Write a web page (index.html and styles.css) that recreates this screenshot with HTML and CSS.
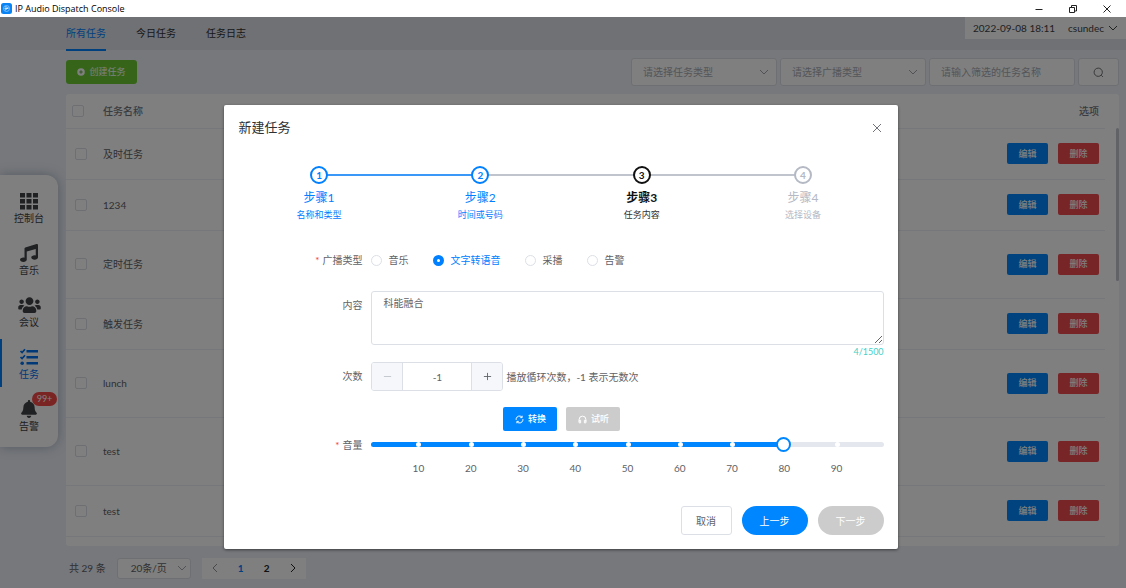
FILE: index.html
```html
<!DOCTYPE html>
<html lang="zh-CN">
<head>
<meta charset="utf-8">
<title>IP Audio Dispatch Console</title>
<link rel="stylesheet" href="styles.css">
</head>
<body>
<header class="titlebar">
  <svg class="app-logo" viewBox="0 0 22 22"><rect width="22" height="22" rx="5" fill="#0a84f5"/><circle cx="11" cy="11" r="6" fill="none" stroke="#8cc8ff" stroke-width="1.6"/><path d="M7 11h8M8 14c3-1 5-3 6-6M8 8h4" fill="none" stroke="#fff" stroke-width="1.4"/></svg>
  <h1 class="app-name">IP Audio Dispatch Console</h1>
  <div class="win-controls">
    <button class="win-btn" aria-label="最小化"><svg viewBox="0 0 10 10"><path d="M1.500 5.500h7"/></svg></button>
    <button class="win-btn" aria-label="还原"><svg viewBox="0 0 10 10"><path d="M1.500 3.500h5v5h-5zM3.500 3V1.500h5v5.500H7"/></svg></button>
    <button class="win-btn" aria-label="关闭窗口"><svg viewBox="0 0 10 10"><path d="M1.500 1.500l7 7M8.500 1.500l-7 7"/></svg></button>
  </div>
</header>

<div class="app">
  <header class="topbar">
    <nav class="tabs">
      <a class="tab active" href="#all">所有任务</a>
      <a class="tab" href="#today">今日任务</a>
      <a class="tab" href="#log">任务日志</a>
    </nav>
    <div class="user-box">
      <time>2022-09-08 18:11</time>
      <button class="user-btn">csundec <svg class="chev" viewBox="0 0 10 10"><path d="M1 3l4 4 4-4"/></svg></button>
    </div>
  </header>

  <div class="body">
    <aside class="side">
      <nav class="side-nav">
        <a class="side-item" href="#console">
          <svg class="side-icon" viewBox="0 0 18 18"><path d="M0 1h5v4.500H0zM6.500 1h5v4.500h-5zM13 1h5v4.500h-5zM0 7h5v4.500H0zM6.500 7h5v4.500h-5zM13 7h5v4.500h-5zM0 13h5v4.500H0zM6.500 13h5v4.500h-5zM13 13h5v4.500h-5z"/></svg>
          控制台</a>
        <a class="side-item" href="#music">
          <svg class="side-icon" viewBox="0 0 512 512"><path d="M511.990 32c0-22-21-36.500-41.600-30.500l-320 96A32 32 0 0 0 128 128v261c-10-3-21-5-32-5-53 0-96 28.700-96 64s43 64 96 64 96-28.700 96-64V214l256-75v186c-10-3-21-5-32-5-53 0-96 28.700-96 64s43 64 96 64 96-28.700 96-64z"/></svg>
          音乐</a>
        <a class="side-item" href="#meeting">
          <svg class="side-icon wide" viewBox="0 0 640 512"><path d="M96 224c35.300 0 64-28.700 64-64s-28.700-64-64-64-64 28.700-64 64 28.700 64 64 64zm448 0c35.300 0 64-28.700 64-64s-28.700-64-64-64-64 28.700-64 64 28.700 64 64 64zm32 32h-64c-17.600 0-33.500 7.100-45.100 18.600 40.300 22.100 68.900 62 75.100 109.400h66c17.700 0 32-14.300 32-32v-32c0-35.300-28.700-64-64-64zm-256 0c61.900 0 112-50.100 112-112S381.900 32 320 32 208 82.100 208 144s50.100 112 112 112zm76.800 32h-8.300c-20.800 10-43.900 16-68.500 16s-47.600-6-68.500-16h-8.300C179.600 288 128 339.600 128 403.200V432c0 26.500 21.500 48 48 48h288c26.500 0 48-21.500 48-48v-28.800c0-63.600-51.600-115.200-115.200-115.200zm-223.700-13.400C161.500 263.100 145.600 256 128 256H64c-35.300 0-64 28.700-64 64v32c0 17.700 14.300 32 32 32h65.900c6.300-47.400 34.900-87.300 75.200-109.400z"/></svg>
          会议</a>
        <a class="side-item active" href="#tasks">
          <svg class="side-icon" viewBox="0 0 18 18"><path d="M6.500 2H18v2.500H6.500zM6.500 8H18v2.500H6.500zM6.500 14H18v2.500H6.500z"/><circle cx="2.200" cy="15.200" r="1.800"/><path d="M.5 3l1.600 1.600L5 1.200M.5 9l1.600 1.600L5 7.200" fill="none" stroke="currentColor" stroke-width="1.700"/></svg>
          任务</a>
        <a class="side-item" href="#alarm">
          <svg class="side-icon" viewBox="0 0 448 512"><path d="M224 512c35.300 0 64-28.700 64-64H160c0 35.300 28.600 64 64 64zm215.400-149.700c-19.300-20.800-55.500-52-55.500-154.300 0-77.700-54.500-139.900-127.900-155.200V32c0-17.700-14.300-32-32-32s-32 14.300-32 32v20.800C118.600 68.100 64.100 130.300 64.100 208c0 102.300-36.200 133.500-55.500 154.300-6 6.400-8.700 14.100-8.600 21.700.1 16.400 13 32 32.100 32h383.800c19.100 0 32-15.600 32.100-32 0-7.600-2.600-15.300-8.600-21.700z"/></svg>
          告警<span class="badge">99+</span></a>
      </nav>
    </aside>

    <main class="main">
      <div class="toolbar">
        <button class="btn-create"><svg viewBox="0 0 16 16"><circle cx="8" cy="8" r="7.500" fill="currentColor"/><path d="M4.500 8h7M8 4.500v7" stroke="#5ba035" stroke-width="1.800"/></svg>创建任务</button>
        <div class="filters">
          <label class="select-wrap"><select class="filter" aria-label="任务类型"><option>请选择任务类型</option></select><svg class="chev" viewBox="0 0 10 10"><path d="M1 3l4 4 4-4"/></svg></label>
          <label class="select-wrap"><select class="filter" aria-label="广播类型"><option>请选择广播类型</option></select><svg class="chev" viewBox="0 0 10 10"><path d="M1 3l4 4 4-4"/></svg></label>
          <input class="filter" type="text" aria-label="任务名称" placeholder="请输入筛选的任务名称">
          <button class="btn-search" aria-label="搜索"><svg viewBox="0 0 12 12"><circle cx="5.700" cy="5.700" r="4.500"/><path d="M9 9l1.800 1.800"/></svg></button>
        </div>
      </div>

      <section class="card">
        <table class="tasks">
          <thead><tr><th class="c-check"><input type="checkbox" aria-label="全选"></th><th>任务名称</th><th class="c-ops">选项</th></tr></thead>
          <tbody>
            <tr><td class="c-check"><input type="checkbox" aria-label="选择"></td><td>及时任务</td><td class="c-ops"><button class="op edit">编辑</button><button class="op del">删除</button></td></tr>
            <tr><td class="c-check"><input type="checkbox" aria-label="选择"></td><td>1234</td><td class="c-ops"><button class="op edit">编辑</button><button class="op del">删除</button></td></tr>
            <tr class="tall"><td class="c-check"><input type="checkbox" aria-label="选择"></td><td>定时任务</td><td class="c-ops"><button class="op edit">编辑</button><button class="op del">删除</button></td></tr>
            <tr><td class="c-check"><input type="checkbox" aria-label="选择"></td><td>触发任务</td><td class="c-ops"><button class="op edit">编辑</button><button class="op del">删除</button></td></tr>
            <tr class="tall"><td class="c-check"><input type="checkbox" aria-label="选择"></td><td>lunch</td><td class="c-ops"><button class="op edit">编辑</button><button class="op del">删除</button></td></tr>
            <tr class="tall"><td class="c-check"><input type="checkbox" aria-label="选择"></td><td>test</td><td class="c-ops"><button class="op edit">编辑</button><button class="op del">删除</button></td></tr>
            <tr><td class="c-check"><input type="checkbox" aria-label="选择"></td><td>test</td><td class="c-ops"><button class="op edit">编辑</button><button class="op del">删除</button></td></tr>
          </tbody>
        </table>
        <div class="scroll-thumb"></div>
      </section>

      <footer class="pager-row">
        <span class="total">共 29 条</span>
        <label class="select-wrap"><select class="page-size" aria-label="每页条数"><option>20条/页</option></select><svg class="chev" viewBox="0 0 10 10"><path d="M1 3l4 4 4-4"/></svg></label>
        <nav class="pager">
          <button class="page prev" aria-label="上一页"><svg class="chev" viewBox="0 0 10 10"><path d="M7 1L3 5l4 4"/></svg></button>
          <button class="page current">1</button>
          <button class="page">2</button>
          <button class="page" aria-label="下一页"><svg class="chev" viewBox="0 0 10 10"><path d="M3 1l4 4-4 4"/></svg></button>
        </nav>
      </footer>
    </main>
  </div>

  <div class="overlay">
    <section class="dialog" role="dialog" aria-labelledby="dlg-title">
      <header class="dialog-head">
        <h2 id="dlg-title">新建任务</h2>
        <button class="close" aria-label="关闭"><svg viewBox="0 0 10 10"><path d="M1 1l8 8M9 1L1 9"/></svg></button>
      </header>

      <ol class="steps">
        <li class="step done"><span class="dot">1</span><span class="step-title">步骤1</span><span class="step-desc">名称和类型</span></li>
        <li class="step done-last"><span class="dot">2</span><span class="step-title">步骤2</span><span class="step-desc">时间或号码</span></li>
        <li class="step now"><span class="dot">3</span><span class="step-title">步骤3</span><span class="step-desc">任务内容</span></li>
        <li class="step"><span class="dot">4</span><span class="step-title">步骤4</span><span class="step-desc">选择设备</span></li>
      </ol>

      <form class="form">
        <div class="row">
          <span class="label required">广播类型</span>
          <div class="radios">
            <label class="radio"><input type="radio" name="kind">音乐</label>
            <label class="radio"><input type="radio" name="kind" checked>文字转语音</label>
            <label class="radio"><input type="radio" name="kind">采播</label>
            <label class="radio"><input type="radio" name="kind">告警</label>
          </div>
        </div>
        <div class="row">
          <label class="label" for="content">内容</label>
          <div class="field">
            <textarea id="content" class="content">科能融合</textarea>
            <span class="counter">4/1500</span>
          </div>
        </div>
        <div class="row">
          <label class="label" for="times">次数</label>
          <div class="times">
            <div class="stepper">
              <button type="button" class="minus" disabled aria-label="减少"><svg viewBox="0 0 10 10"><path d="M1 5h8"/></svg></button>
              <input id="times" type="text" value="-1">
              <button type="button" aria-label="增加"><svg viewBox="0 0 10 10"><path d="M1 5h8M5 1v8"/></svg></button>
            </div>
            <span>播放循环次数，-1 表示无数次</span>
          </div>
        </div>
        <div class="actions">
          <button type="button" class="act"><svg viewBox="0 0 12 12"><path d="M10.500 7A4.600 4.600 0 0 1 3 9.500M1.500 5A4.600 4.600 0 0 1 9 2.500M9.500 1v2.500H7M2.500 11V8.500H5M1.500 5v1.500M10.500 7V5.500"/></svg>转换</button>
          <button type="button" class="act" disabled><svg viewBox="0 0 12 12"><path d="M1.500 9V6a4.500 4.500 0 0 1 9 0v3M3.500 7v3.500h-2V7zM8.500 7v3.500h2V7z"/></svg>试听</button>
        </div>
        <div class="row">
          <label class="label required" for="volume">音量</label>
          <div class="slider">
            <div class="track"><div class="fill"></div></div>
            <span class="stop" style="left:9.18%"></span><span class="stop" style="left:19.39%"></span><span class="stop" style="left:29.59%"></span><span class="stop" style="left:39.8%"></span><span class="stop" style="left:50%"></span><span class="stop" style="left:60.2%"></span><span class="stop" style="left:70.41%"></span><span class="stop" style="left:90.82%"></span>
            <input id="volume" type="range" min="1" max="99" value="80">
            <span class="mark" style="left:9.18%">10</span><span class="mark" style="left:19.39%">20</span><span class="mark" style="left:29.59%">30</span><span class="mark" style="left:39.8%">40</span><span class="mark" style="left:50%">50</span><span class="mark" style="left:60.2%">60</span><span class="mark" style="left:70.41%">70</span><span class="mark" style="left:80.61%">80</span><span class="mark" style="left:90.82%">90</span>
          </div>
        </div>
      </form>

      <footer class="dialog-foot">
        <button class="btn cancel">取消</button>
        <button class="btn primary">上一步</button>
        <button class="btn primary" disabled>下一步</button>
      </footer>
    </section>
  </div>
</div>
</body>
</html>
```
FILE: styles.css
```css
* { box-sizing: border-box; }
html, body { height: 100%; }
body {
  margin: 0;
  display: flex;
  flex-direction: column;
  font: 10px/16px Lato, "Noto Sans CJK SC", sans-serif;
  color: #606266;
  background: #fff;
  overflow: hidden;
}
button, input, select, textarea { font: inherit; color: inherit; margin: 0; }
button { border: 0; padding: 0; background: none; display: inline-flex; align-items: center; justify-content: center; white-space: nowrap; }
a { color: inherit; text-decoration: none; }
svg { flex: none; }

.titlebar { flex: none; height: 17px; display: flex; align-items: center; background: #fff; color: #000; }
.app-logo { width: 11px; height: 11px; margin: 0 3px 0 1px; }
.app-name { margin: 0; font: 9px/14px "Open Sans", sans-serif; }
.win-controls { margin-left: auto; display: flex; padding-right: 2px; }
.win-btn { width: 34px; height: 16px; }
.win-btn svg { width: 10px; height: 10px; fill: none; stroke: #222; }

.app { flex: 1; min-height: 0; position: relative; display: flex; flex-direction: column; background: #edf0f8; }
.topbar { flex: none; height: 33px; display: flex; justify-content: space-between; background: #e1e3ea; }
.tabs { display: flex; gap: 30px; padding-left: 66px; }
.tab { height: 34px; line-height: 33px; color: #303133; border-bottom: 2px solid transparent; }
.tab.active { color: #0080ff; border-color: #0080ff; }
.user-box { height: 22px; display: flex; align-items: center; gap: 13px; padding: 0 8px; background: #fff; color: #404246; }
.user-btn { gap: 4px; }
.chev { width: 10px; height: 10px; fill: none; stroke: currentColor; }

.body { flex: 1; display: flex; min-height: 0; }
.side { width: 66px; flex: none; padding-top: 125px; }
.side-nav { width: 58px; display: flex; flex-direction: column; gap: 4px; padding: 8px 0; background: #fff; border-radius: 0 12px 12px 0; box-shadow: 0 0 12px rgba(60, 90, 110, .4); }
.side-item { position: relative; height: 48px; display: flex; flex-direction: column; align-items: center; padding-top: 9px; color: #404246; }
.side-item.active { color: #0070f0; }
.side-item.active::before { content: ""; position: absolute; left: 0; top: 0; width: 2px; height: 48px; background: #0080ff; }
.side-icon { width: 18px; height: 18px; fill: currentColor; }
.side-icon.wide { width: 23px; }
.badge { position: absolute; left: 32px; top: 1px; width: 25px; height: 14px; border-radius: 7px; background: #f54848; color: #fff; font-size: 9px; line-height: 14px; text-align: center; }

.main { flex: 1; min-width: 0; padding: 8px 7px 0 0; display: flex; flex-direction: column; }
.toolbar { display: flex; justify-content: space-between; align-items: center; height: 28px; }
.btn-create { width: 71px; height: 24px; gap: 4px; border-radius: 3px; background: #6ccb34; color: #fff; font-size: 9px; }
.btn-create svg { width: 8px; height: 8px; }
.filters { display: flex; gap: 3px; }
.select-wrap { position: relative; display: block; }
.select-wrap .chev { position: absolute; right: 8px; top: 50%; margin-top: -5px; color: #a0a4ac; pointer-events: none; }
.filter, .btn-search, .page-size { appearance: none; background: #fff; border: 1px solid #dcdfe6; border-radius: 3px; }
.filter { width: 146px; height: 28px; padding: 0 11px; color: #a8abb2; }
.filter::placeholder { color: #a8abb2; }
.btn-search { width: 41px; height: 28px; }
.btn-search svg { width: 11px; height: 11px; fill: none; stroke: #606266; }

.card { position: relative; margin-top: 8px; padding: 0 14px 9px 0; background: #fff; border-radius: 3px; }
.tasks { width: 100%; border-collapse: collapse; }
.tasks th, .tasks td { padding: 0; text-align: left; border-bottom: 1px solid #ebeef5; height: 51px; }
.tasks th { height: 34px; font-weight: 500; color: #74777e; }
.tasks .tall td { height: 68px; }
.tasks .c-check { width: 37px; padding-left: 9px; }
.tasks th.c-check { padding-left: 6px; }
.tasks .c-ops { text-align: right; padding-right: 6px; }
.c-check input { appearance: none; display: block; width: 12px; height: 12px; border: 1px solid #dcdfe6; border-radius: 2px; }
.op { width: 41px; height: 21px; margin-left: 10px; border-radius: 2px; color: #fff; font-size: 9px; font-weight: 500; }
.edit { background: #0086ff; }
.del { background: #f04a4e; }
.scroll-thumb { position: absolute; right: 0; top: 34px; width: 3px; height: 153px; border-radius: 2px; background: #c0c4cc; }

.pager-row { display: flex; align-items: center; gap: 11px; margin-top: 12px; padding-left: 3px; height: 21px; }
.page-size { display: block; width: 74px; height: 21px; padding: 0 13px; }
.pager-row .select-wrap .chev { right: 4px; }
.pager { display: flex; background: #fff; color: #222; font-weight: 700; }
.page { width: 26px; height: 21px; }
.page.current { color: #0080ff; }
.page.prev { color: #909399; }

.overlay { position: absolute; inset: 0; padding-right: 4px; background: rgba(0, 0, 0, .5); }
.dialog { width: 60%; margin: 15vh auto 0; padding: 13px 14px 14px; background: #fff; border-radius: 2px; box-shadow: 0 1px 3px rgba(0, 0, 0, .5); }
.dialog-head { display: flex; justify-content: space-between; align-items: center; height: 19px; }
.dialog-head h2 { margin: 0; font-size: 13px; line-height: 19px; font-weight: 400; color: #303133; }
.close { width: 14px; height: 14px; }
.close svg { width: 10px; height: 10px; fill: none; stroke: #707379; }

.steps { list-style: none; display: flex; margin: 29px 0 0; padding: 0; }
.step { position: relative; flex: 1; display: flex; flex-direction: column; align-items: center; color: #b4b9c4; }
.step:not(:last-child)::after { content: ""; position: absolute; left: 50%; top: 8px; width: 100%; height: 2px; background: #c0c4cc; }
.step.done, .step.done-last { color: #0080ff; }
.step.done::after { background: #3a98f8; }
.step.now { color: #111; }
.dot { position: relative; z-index: 1; width: 18px; height: 18px; border: 2px solid currentColor; border-radius: 50%; background: #fff; line-height: 14px; text-align: center; font-weight: 700; }
.step-title { margin-top: 5px; font-size: 12px; line-height: 18px; }
.step.now .step-title { font-weight: 700; }
.step-desc { font-size: 9px; line-height: 14px; margin-top: 1px; }
.step.now .step-desc { color: #303133; }

.form { margin-top: 24px; }
.row { display: flex; margin-bottom: 17px; }
.label { flex: none; width: 133px; padding-right: 9px; line-height: 28px; text-align: right; }
.required::before { content: "*"; color: #f23c3c; margin-right: 3px; }
.radios { display: flex; gap: 25px; height: 28px; }
.radio { display: flex; align-items: center; gap: 6px; }
.radio:has(input:checked) { color: #0080ff; }
.radio input { appearance: none; width: 11px; height: 11px; border: 1px solid #dcdfe6; border-radius: 50%; background: #fff; }
.radio input:checked { border: 4px solid #0080ff; }
.field { position: relative; flex: 1; }
.content { display: block; width: 100%; height: 54px; padding: 3px 11px; border: 1px solid #dcdfe6; border-radius: 3px; resize: vertical; outline: 0; }
.counter { position: absolute; right: 0; top: 55px; font-size: 9px; line-height: 12px; color: #45d0c8; }
.times { display: flex; align-items: center; gap: 3px; }
.stepper { display: flex; width: 132px; height: 29px; border: 1px solid #dcdfe6; border-radius: 3px; overflow: hidden; }
.stepper button { width: 30px; background: #f5f7fa; }
.stepper svg { width: 9px; height: 9px; fill: none; stroke: #606266; }
.stepper .minus svg { stroke: #c0c4cc; }
.stepper input { flex: 1; min-width: 0; border: solid #dcdfe6; border-width: 0 1px; text-align: center; }
.actions { display: flex; gap: 9px; padding-left: 265px; margin-top: -1px; }
.act { width: 54px; height: 24px; gap: 4px; border-radius: 2px; background: #0086ff; color: #fff; font-size: 9px; font-weight: 500; }
.act svg { width: 9px; height: 9px; fill: none; stroke: currentColor; stroke-width: 1.3; }
.act:disabled, .btn:disabled { background: #ccc; }
.slider { position: relative; flex: 1; height: 28px; }
.track { position: absolute; left: 0; right: 0; top: 11px; height: 5px; border-radius: 3px; background: #e4e7ed; overflow: hidden; }
.fill { width: 80.61%; height: 100%; background: #0086ff; }
.stop { position: absolute; top: 11px; width: 5px; height: 5px; margin-left: -2px; border-radius: 50%; background: #fff; }
.slider input { appearance: none; position: absolute; left: -7px; top: 6px; width: calc(100% + 14px); height: 15px; background: none; }
.slider input::-webkit-slider-thumb { appearance: none; width: 15px; height: 15px; border: 2px solid #0086ff; border-radius: 50%; background: #fff; }
.mark { position: absolute; top: 29px; width: 20px; margin-left: -10px; text-align: center; }

.dialog-foot { display: flex; justify-content: flex-end; gap: 10px; margin-top: 47px; }
.btn { height: 29px; width: 66px; border-radius: 15px; }
.primary { background: #0086ff; color: #fff; }
.cancel { width: 51px; border: 1px solid #dcdfe6; border-radius: 3px; }
```
